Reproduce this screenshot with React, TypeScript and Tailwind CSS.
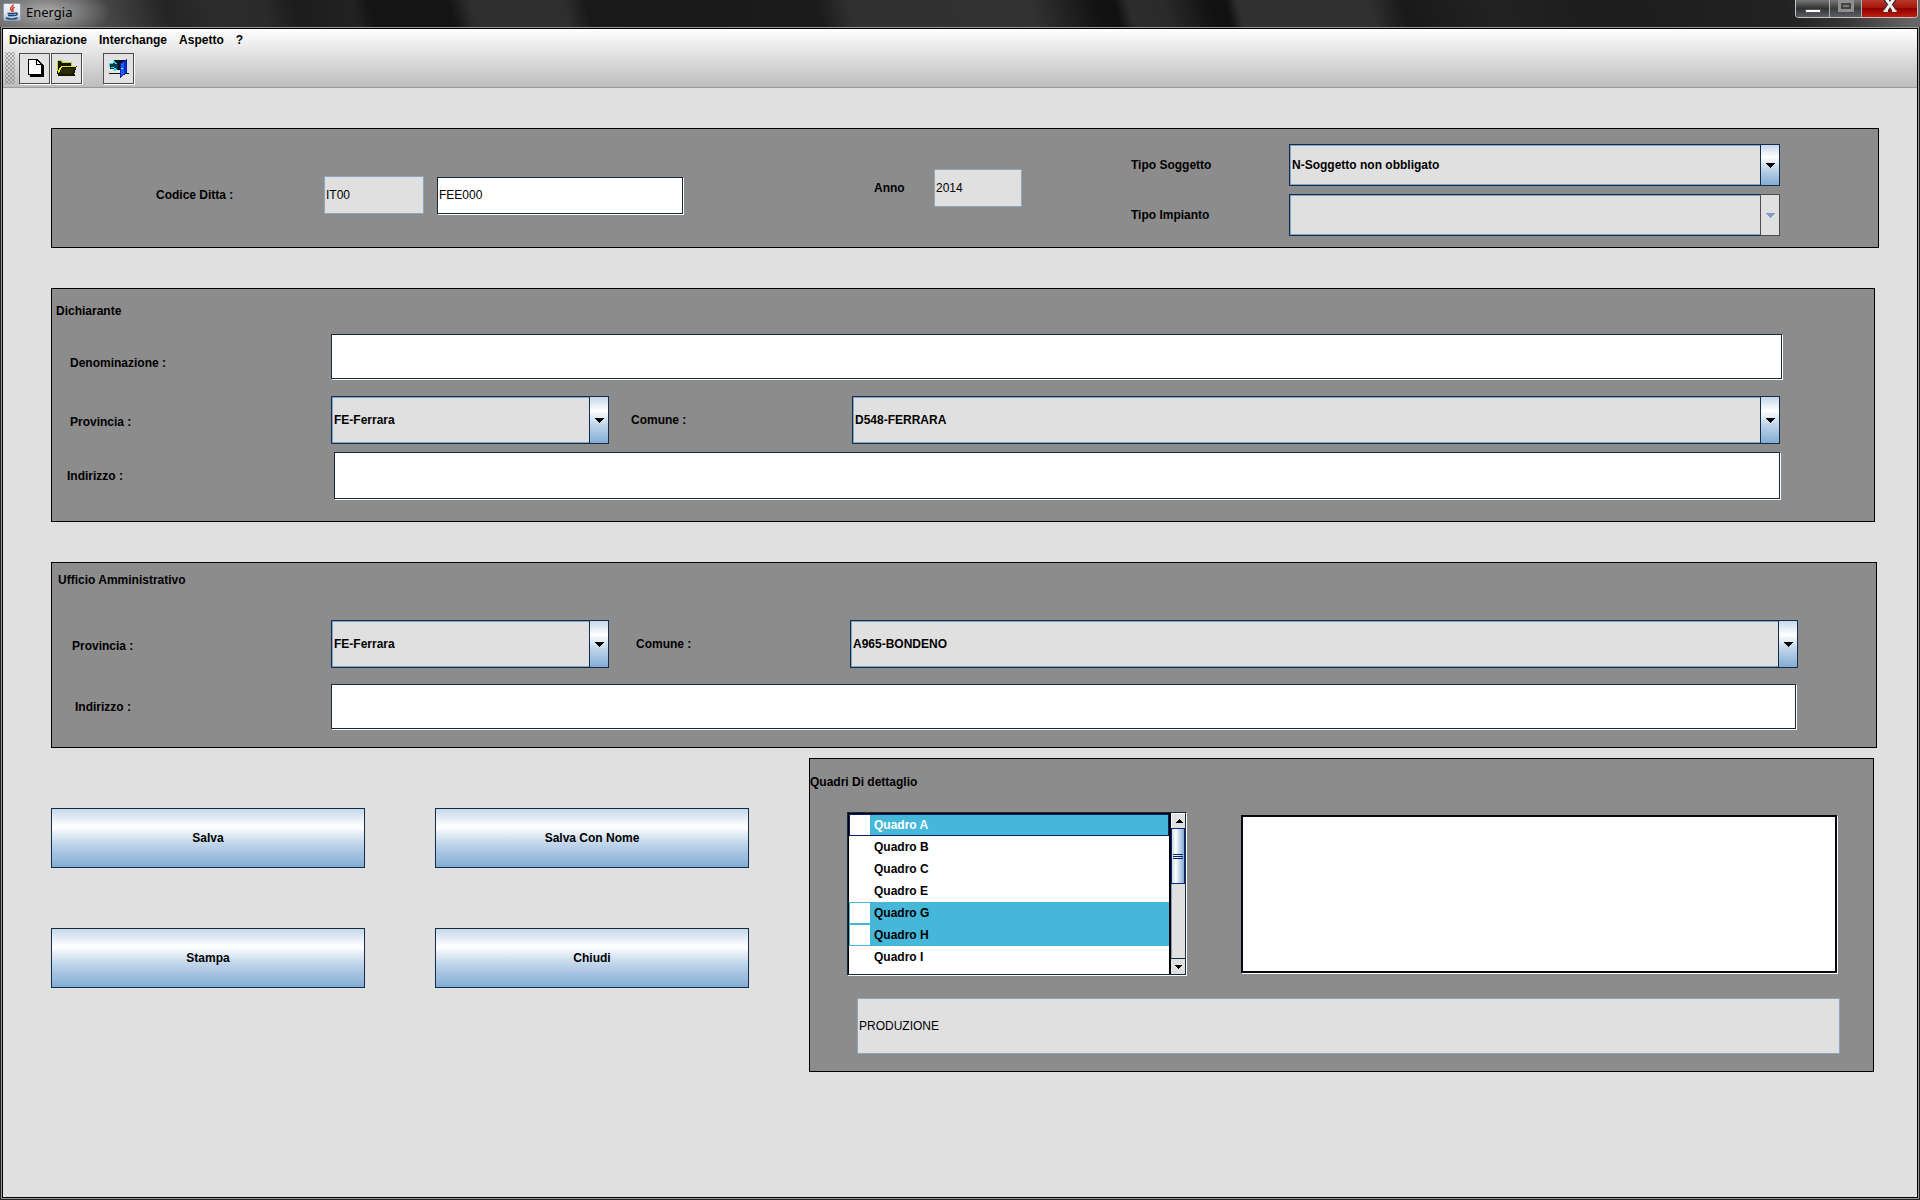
import { useId, useState } from 'react';
import type { ReactNode } from 'react';

function JavaIcon() {
  return (
    <svg width="18" height="18" viewBox="0 0 18 18" aria-hidden="true">
      <defs>
        <linearGradient id="java-bg" x1="0" y1="0" x2="0" y2="1">
          <stop offset="0" stopColor="#f4f6f8" />
          <stop offset="0.6" stopColor="#dfe6ec" />
          <stop offset="1" stopColor="#9fb2c4" />
        </linearGradient>
      </defs>
      <rect x="0.5" y="0.5" width="17" height="17" rx="1.5" fill="url(#java-bg)" stroke="#8fa0b0" />
      <path d="M10 1.500c.8 1.800-2.800 2.600-2.400 4.400.2 1 1.200 1.400.9 2.700M11.600 4.200c-1.600.8-2.300 1.600-1.700 2.700.4.8.2 1.400-.4 2" fill="none" stroke="#d8301c" strokeWidth="1.5" />
      <path d="M4.500 10.500h7.600M5 12.500h6.500M12.200 10c2.800-.6 2.600 2.200-.4 2.600M3 15c3 1.200 8.500 1.200 11.500 0" fill="none" stroke="#123f78" strokeWidth="1.5" />
    </svg>
  );
}

function NewIcon() {
  return (
    <svg width="19" height="18" viewBox="-3 0 19 18" shapeRendering="crispEdges" aria-hidden="true">
      <path d="M2 2H11L16 7V18H2Z" fill="#000" />
      <path d="M0 0H9L14 5V16H0Z" fill="#000" />
      <path d="M1 1H8V6H13V15H1ZM9 2H10V3H11V4H12V5H9Z" fill="#fff" />
    </svg>
  );
}

function OpenIcon() {
  return (
    <svg width="20" height="16" viewBox="0 0 20 16" shapeRendering="crispEdges" aria-hidden="true">
      <path d="M0 1H6V3H15V6H20L17 14H18V16H1V14H0Z" fill="#151500" />
      <path d="M1 0H5V1H6V2H15V6H14V3H5V2H4V1H1V11H0V1H1Z" fill="#c9cf2a" />
      <path d="M4 6H19V7H5V8H4V10H3V12H2V13H1V10H2V8H3V7H4Z" fill="#e2e83a" />
      <path d="M5 8H18L15 14H2V13H3V11H4V9H5Z" fill="#2a2a08" />
    </svg>
  );
}

function ExitIcon() {
  return (
    <svg width="20" height="19" viewBox="0 0 20 19" shapeRendering="crispEdges" aria-hidden="true">
      <path d="M5 1H18V14H20V15H0V14H5Z" fill="#0c1418" />
      <path d="M5 11H11V14H5Z" fill="#e8e8e8" />
      <path d="M1 4H9V10H1Z" fill="#083c46" />
      <path d="M0 4H4V5H1V8H0ZM4 2H6V3H7V4H8V5H6V4H4ZM2 8H5V9H2ZM5 9H7V10H8V11H7V12H5Z" fill="#25dce6" />
      <path d="M11 4L18 0V14L11 19Z" fill="#0b1fb4" />
      <path d="M12 5L15 3V15L12 17Z" fill="#1f5ff0" />
      <path d="M15 4L17 3V13L15 15Z" fill="#1030c8" />
      <path d="M12 9H14V10H12Z" fill="#8fe8ff" />
    </svg>
  );
}

function ToolButton({ label, children }: { label: string; children: ReactNode }) {
  return (
    <button
      type="button"
      aria-label={label}
      className="flex size-[31px] items-center justify-center border border-[#4c4c4c] bg-[#e2e2e2] shadow-[1px_1px_0_#fff]"
    >
      {children}
    </button>
  );
}

function TitleBar() {
  return (
    <header className="flex h-[27px] items-start justify-between bg-[radial-gradient(ellipse_64px_26px_at_46px_12px,#b4b4b4e6,#8c8c8c99_60%,transparent),linear-gradient(75deg,#6a6a6a_0px,#4a4a4a_100px,#242424_165px,#2c2c2c_210px,#2a2a2a_260px,#1c1c1c_290px,#222_345px,#141414_363px,#141414_440px,#2e2e2e_460px,#2e2e2e_550px,#191919_572px,#1b1b1b_795px,#303030_825px,#323232_1000px,#121212_1065px,#111_1083px,#2c2c2c_1096px,#2a2a2a_1130px,#111_1175px,#111_1190px,#303030_1202px,#303030_1328px,#191919_1360px,#222_1450px,#1c1c1c_1550px,#222_1730px,#333_1780px,#666_1850px)]">
      <div className="flex items-center gap-1 pt-[3px] pl-[3px]">
        <JavaIcon />
        <h1 className="pl-px font-['Noto_Sans',sans-serif] text-[13px] leading-[18px] text-black">Energia</h1>
      </div>
      <div className="mr-[2px] flex h-[18px] overflow-hidden rounded-b border border-t-0 border-[#c4c4c4] bg-black">
        <button
          type="button"
          aria-label="Riduci a icona"
          className="flex w-[34px] items-end justify-center border-r border-[#b0b0b0] bg-linear-to-b from-[#777] via-[#333] via-50% to-[#5a5e66] pb-1"
        >
          <span className="h-[4px] w-4 border border-[#555] bg-white" />
        </button>
        <button
          type="button"
          aria-label="Ingrandisci"
          className="flex w-8 items-start justify-center border-r border-[#b0b0b0] bg-linear-to-b from-[#777] via-[#3c3c3c] via-50% to-[#5a5e66]"
        >
          <span className="flex h-3 w-4 items-center justify-center bg-[#8f8f8f]">
            <span className="h-[6px] w-[10px] border-2 border-[#444] bg-[#777]" />
          </span>
        </button>
        <button
          type="button"
          aria-label="Chiudi finestra"
          className="flex w-[55px] items-start justify-center bg-[linear-gradient(to_bottom,#b8372c,#a81408_45%,#8a0000_50%,#c41c0c)]"
        >
          <svg width="16" height="13" viewBox="0 0 16 13" aria-hidden="true">
            <path d="M3 -2L13 11.500M13 -2L3 11.500" stroke="#333" strokeWidth="5" />
            <path d="M3.500 -2L12.500 11M12.500 -2L3.500 11" stroke="#f2f2f2" strokeWidth="3" />
            <path d="M1.500 11H6M10 11H14.500" stroke="#e4e4e4" strokeWidth="2" />
          </svg>
        </button>
      </div>
    </header>
  );
}

function MenuBar() {
  return (
    <nav className="flex items-center gap-3 px-[6px] pt-[3px]">
      {['Dichiarazione', 'Interchange', 'Aspetto', '?'].map((item) => (
        <button key={item} type="button" className="h-4 leading-4 font-bold">
          {item}
        </button>
      ))}
    </nav>
  );
}

function ToolBar() {
  return (
    <div role="toolbar" aria-label="Strumenti" className="flex items-center gap-px pt-1 pb-[3px] pl-[2px]">
      <span className="mr-[3px] h-8 w-[10px] bg-[radial-gradient(#777_0.500px,transparent_1px),radial-gradient(#777_0.500px,transparent_1px)] bg-[size:4px_4px] bg-[position:0_0,2px_2px]" />
      <ToolButton label="Nuovo">
        <NewIcon />
      </ToolButton>
      <ToolButton label="Apri">
        <OpenIcon />
      </ToolButton>
      <span className="w-[19px]" />
      <ToolButton label="Esci">
        <ExitIcon />
      </ToolButton>
    </div>
  );
}

function Panel({ className, children }: { className: string; children: ReactNode }) {
  return <section className={`border border-black bg-[#8c8c8c] ${className}`}>{children}</section>;
}

function TextField({ id, value = '', className }: { id: string; value?: string; className: string }) {
  return (
    <input
      id={id}
      type="text"
      defaultValue={value}
      className={`min-w-0 border border-[#1a2838] bg-white px-px shadow-[1px_1px_0_#fff] outline-none ${className}`}
    />
  );
}

function ReadOnlyField({ label, id, value, className }: { label?: string; id: string; value: string; className: string }) {
  return (
    <input
      id={id}
      type="text"
      readOnly
      aria-label={label}
      value={value}
      className={`min-w-0 border border-[#8ba6c1] bg-[#e0e0e0] px-px outline-none ${className}`}
    />
  );
}

function Combo({ id, options, disabled = false, className }: { id: string; options: string[]; disabled?: boolean; className: string }) {
  return (
    <div className={`relative min-w-0 ${className}`}>
      <select
        id={id}
        disabled={disabled}
        className="size-full appearance-none border border-[#142c4c] bg-[#e0e0e0] pr-6 pl-[2px] font-bold opacity-100 shadow-[inset_0_0_0_1px_#7fa5cf] outline-none"
      >
        {options.map((option) => (
          <option key={option}>{option}</option>
        ))}
      </select>
      <span
        className={`pointer-events-none absolute inset-y-0 right-0 flex w-5 items-center justify-center border ${
          disabled
            ? 'border-[#4c4c4c] bg-[#e0e0e0] text-[#7f9dc4]'
            : 'border-[#142c4c] bg-[linear-gradient(to_bottom,#c5d8ec,#fff_30%,#c0d5ea_60%,#82acd4)] text-black'
        }`}
      >
        <svg width="10" height="5" viewBox="0 0 10 5" shapeRendering="crispEdges" aria-hidden="true">
          <path d="M0 0H10L5 5Z" fill="currentColor" />
        </svg>
      </span>
    </div>
  );
}

function FieldLabel({ htmlFor, className = '', children }: { htmlFor: string; className?: string; children: ReactNode }) {
  return (
    <label htmlFor={htmlFor} className={`shrink-0 leading-4 font-bold whitespace-nowrap ${className}`}>
      {children}
    </label>
  );
}

function CompanyPanel() {
  return (
    <Panel className="mr-[38px] flex h-[120px] items-center pr-[98px] pl-[104px]">
      <div className="mt-[14px] flex shrink-0 items-center">
        <FieldLabel htmlFor="codice-ditta" className="w-[168px]">
          Codice Ditta :
        </FieldLabel>
        <ReadOnlyField id="codice-prefisso" label="Prefisso codice ditta" value="IT00" className="mr-[13px] h-[38px] w-[100px]" />
        <TextField id="codice-ditta" value="FEE000" className="h-[37px] w-[246px]" />
      </div>
      <div className="ml-[191px] flex shrink-0 items-center">
        <FieldLabel htmlFor="anno" className="w-[60px]">
          Anno
        </FieldLabel>
        <ReadOnlyField id="anno" value="2014" className="h-[38px] w-[88px]" />
      </div>
      <div className="mt-1 ml-[109px] grid min-w-0 flex-1 grid-cols-[158px_1fr] items-center gap-y-2">
        <FieldLabel htmlFor="tipo-soggetto">Tipo Soggetto</FieldLabel>
        <Combo id="tipo-soggetto" options={['N-Soggetto non obbligato']} className="h-[42px]" />
        <FieldLabel htmlFor="tipo-impianto">Tipo Impianto</FieldLabel>
        <Combo id="tipo-impianto" options={['']} disabled className="h-[42px]" />
      </div>
    </Panel>
  );
}

function DeclarantPanel() {
  return (
    <Panel className="mt-10 mr-[42px] pb-[22px]">
      <h2 className="pt-[14px] pl-1 leading-4 font-bold">Dichiarante</h2>
      <div className="mt-[15px] flex items-center pr-[92px] pl-[18px]">
        <FieldLabel htmlFor="denominazione" className="w-[261px] pt-3">
          Denominazione :
        </FieldLabel>
        <TextField id="denominazione" className="h-[45px] flex-1" />
      </div>
      <div className="mt-[17px] flex items-center pr-[94px] pl-[18px]">
        <FieldLabel htmlFor="dich-provincia" className="w-[261px] pt-1">
          Provincia :
        </FieldLabel>
        <Combo id="dich-provincia" options={['FE-Ferrara']} className="h-12 w-[278px] shrink-0" />
        <FieldLabel htmlFor="dich-comune" className="ml-[22px] w-[221px]">
          Comune :
        </FieldLabel>
        <Combo id="dich-comune" options={['D548-FERRARA']} className="h-12 flex-1" />
      </div>
      <div className="mt-2 flex items-center pr-[94px] pl-[15px]">
        <FieldLabel htmlFor="dich-indirizzo" className="w-[267px]">
          Indirizzo :
        </FieldLabel>
        <TextField id="dich-indirizzo" className="h-[47px] flex-1" />
      </div>
    </Panel>
  );
}

function OfficePanel() {
  return (
    <Panel className="mt-10 mr-10 pb-[18px]">
      <h2 className="pt-[9px] pl-[6px] leading-4 font-bold">Ufficio Amministrativo</h2>
      <div className="mt-8 flex items-center pr-[78px] pl-5">
        <FieldLabel htmlFor="uff-provincia" className="w-[259px] pt-1">
          Provincia :
        </FieldLabel>
        <Combo id="uff-provincia" options={['FE-Ferrara']} className="h-12 w-[278px] shrink-0" />
        <FieldLabel htmlFor="uff-comune" className="ml-[27px] w-[214px]">
          Comune :
        </FieldLabel>
        <Combo id="uff-comune" options={['A965-BONDENO']} className="h-12 flex-1" />
      </div>
      <div className="mt-4 flex items-center pr-20 pl-[23px]">
        <FieldLabel htmlFor="uff-indirizzo" className="w-[256px]">
          Indirizzo :
        </FieldLabel>
        <TextField id="uff-indirizzo" className="h-[45px] flex-1" />
      </div>
    </Panel>
  );
}

function ActionButtons() {
  return (
    <div className="mt-[60px] grid shrink-0 grid-cols-[314px_314px] gap-x-[70px] gap-y-[60px] self-start">
      {['Salva', 'Salva Con Nome', 'Stampa', 'Chiudi'].map((label) => (
        <button
          key={label}
          type="button"
          className="h-[60px] border border-[#142c44] bg-[linear-gradient(to_bottom,#c5d8ec,#fff_30%,#c0d5ea_60%,#82acd4)] font-bold"
        >
          {label}
        </button>
      ))}
    </div>
  );
}

const QUADRI = [
  { name: 'Quadro A', selected: true },
  { name: 'Quadro B', selected: false },
  { name: 'Quadro C', selected: false },
  { name: 'Quadro E', selected: false },
  { name: 'Quadro G', selected: true },
  { name: 'Quadro H', selected: true },
  { name: 'Quadro I', selected: false },
];

function QuadroRow({ name, selected, current }: { name: string; selected: boolean; current: boolean }) {
  const id = useId();
  const [checked, setChecked] = useState(selected);
  const tone = checked ? 'bg-[#45b8d9]' : 'bg-white';
  const edge = current ? 'border-[#0a1f6a] text-white' : checked ? 'border-[#45b8d9]' : 'border-white';
  return (
    <li className={`flex h-[22px] items-center border ${tone} ${edge}`}>
      <input
        id={id}
        type="checkbox"
        checked={checked}
        onChange={() => setChecked(!checked)}
        className="h-5 w-5 appearance-none bg-white outline-none"
      />
      <label htmlFor={id} className="flex-1 pl-1 leading-5 font-bold">
        {name}
      </label>
    </li>
  );
}

function ScrollBar() {
  return (
    <div className="flex w-[14px] flex-col bg-[#e0e0e0]">
      <button type="button" aria-label="Scorri su" className="flex h-[15px] items-center justify-center border border-r-0 border-b-0 border-white">
        <svg width="8" height="4" viewBox="0 0 8 4" shapeRendering="crispEdges" aria-hidden="true">
          <path d="M4 0L8 4H0Z" fill="#000" />
        </svg>
      </button>
      <div className="flex h-14 flex-col items-center justify-center gap-px border border-[#0a2a7a] bg-linear-to-r from-[#c5d8ec] via-white via-30% to-[#82acd4]">
        <span className="h-px w-[10px] bg-[#0a1f6a]" />
        <span className="h-px w-[10px] bg-[#0a1f6a]" />
        <span className="h-px w-[10px] bg-[#0a1f6a]" />
      </div>
      <div className="flex-1 border-l border-[#7f9dc4]" />
      <button type="button" aria-label="Scorri giù" className="flex h-4 items-center justify-center border-t border-[#142c44]">
        <svg width="8" height="4" viewBox="0 0 8 4" shapeRendering="crispEdges" aria-hidden="true">
          <path d="M0 0H8L4 4Z" fill="#000" />
        </svg>
      </button>
    </div>
  );
}

function DetailPanel() {
  return (
    <Panel className="mt-[10px] mr-[43px] ml-[60px] min-w-0 flex-1 pb-[17px]">
      <h2 className="pt-[15px] leading-4 font-bold">Quadri Di dettaglio</h2>
      <div className="mt-[22px] flex items-center pr-9 pl-[37px]">
        <div className="flex h-[163px] w-[339px] shrink-0 border border-[#1a2838] shadow-[1px_1px_0_#fff]">
          <ul className="flex-1 border-t border-r-2 border-l border-black bg-white">
            {QUADRI.map((quadro, index) => (
              <QuadroRow key={quadro.name} name={quadro.name} selected={quadro.selected} current={index === 0} />
            ))}
          </ul>
          <ScrollBar />
        </div>
        <textarea
          aria-label="Dettaglio quadro"
          className="ml-[55px] h-[158px] min-w-0 flex-1 resize-none border-2 border-[#05090f] bg-white shadow-[1px_1px_0_#fff] outline-none"
        />
      </div>
      <div className="mt-[23px] flex pr-[33px] pl-[47px]">
        <ReadOnlyField id="descrizione" label="Descrizione quadro" value="PRODUZIONE" className="h-14 flex-1" />
      </div>
    </Panel>
  );
}

export default function App() {
  return (
    <div className="flex min-h-screen flex-col bg-[#222] font-['Liberation_Sans',Arial,sans-serif] text-xs text-black">
      <TitleBar />
      <div className="mx-px mb-px flex flex-1 flex-col border border-[#999]">
        <div className="flex flex-1 flex-col border border-black bg-[#e0e0e0]">
          <div className="border-b border-[#999] bg-linear-to-b from-white to-[#bdbdbd]">
            <MenuBar />
            <ToolBar />
          </div>
          <main className="flex-1 pt-10 pl-12">
            <CompanyPanel />
            <DeclarantPanel />
            <OfficePanel />
            <div className="flex items-start">
              <ActionButtons />
              <DetailPanel />
            </div>
          </main>
        </div>
      </div>
    </div>
  );
}
